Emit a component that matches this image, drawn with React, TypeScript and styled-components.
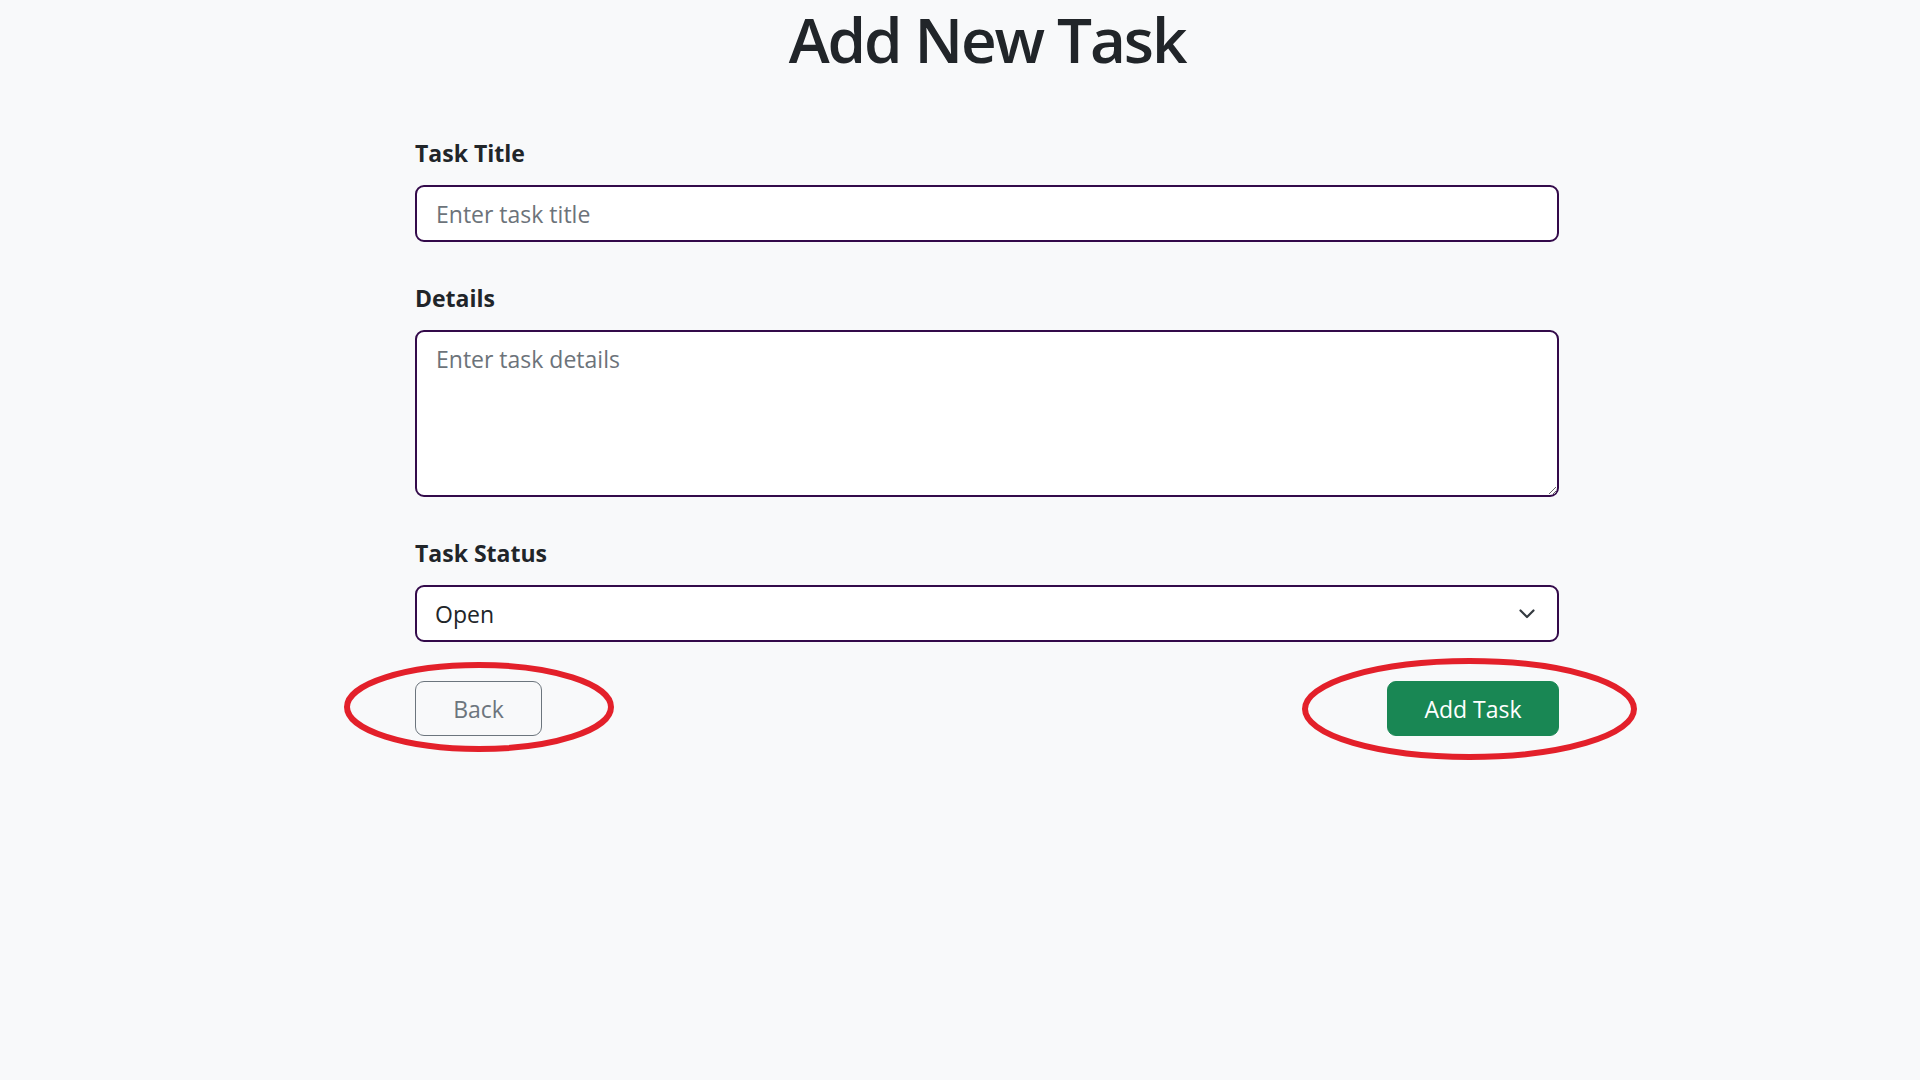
import React from "react";
import styled, { createGlobalStyle } from "styled-components";

const GlobalStyle = createGlobalStyle`
  html, body {
    margin: 0;
    padding: 0;
    background: #f8f9fa;
  }
  body {
    font-family: "Open Sans", "Noto Sans", "Liberation Sans", sans-serif;
    color: #212529;
  }
  * { box-sizing: border-box; }
`;

const Page = styled.div`
  min-height: 1080px;
  padding-left: 54px;
  padding-top: 4px;
  display: flex;
  flex-direction: column;
  align-items: center;
`;

const Title = styled.h1`
  margin: 0;
  font-size: 62px;
  font-weight: 600;
  line-height: 70px;
  color: #212529;
  letter-spacing: -2.1px;
`;

const Form = styled.form`
  width: 1144px;
  margin-top: 61px;
  display: flex;
  flex-direction: column;
`;

const Field = styled.div<{ $last?: boolean }>`
  display: flex;
  flex-direction: column;
  margin-bottom: ${(p) => (p.$last ? "39px" : "38px")};
`;

const Label = styled.label`
  font-size: 23px;
  font-weight: 700;
  line-height: 36px;
  margin-bottom: 14px;
  color: #212529;
`;

const controlStyles = `
  width: 100%;
  border: 2px solid #330a4a;
  border-radius: 9px;
  background: #ffffff;
  font-family: "Open Sans", "Noto Sans", "Liberation Sans", sans-serif;
  font-size: 23px;
  line-height: 36px;
  color: #212529;
  outline: none;
  &::placeholder {
    color: #6c737a;
  }
`;

const TextInput = styled.input`
  ${controlStyles}
  height: 57px;
  padding: 0 19px;
`;

const TextArea = styled.textarea`
  ${controlStyles}
  height: 167px;
  padding: 9px 19px;
  resize: vertical;
  display: block;
`;

const SelectWrap = styled.div`
  position: relative;
`;

const Select = styled.select`
  ${controlStyles}
  height: 57px;
  padding: 0 60px 0 18px;
  appearance: none;
  -webkit-appearance: none;
`;

const Chevron = styled.svg`
  position: absolute;
  right: 24px;
  top: 50%;
  transform: translateY(-50%);
  pointer-events: none;
`;

const Actions = styled.div`
  display: flex;
  justify-content: space-between;
  align-items: center;
`;

const ButtonWrap = styled.div`
  position: relative;
`;

const Button = styled.button<{ $variant: "back" | "primary" }>`
  height: 55px;
  width: ${(p) => (p.$variant === "back" ? "127px" : "172px")};
  border-radius: 9px;
  font-family: "Open Sans", "Noto Sans", "Liberation Sans", sans-serif;
  font-size: 23px;
  line-height: 36px;
  padding: 0;
  cursor: pointer;
  border: 1.5px solid ${(p) => (p.$variant === "back" ? "#6c757d" : "#198754")};
  background: ${(p) => (p.$variant === "back" ? "transparent" : "#198754")};
  color: ${(p) => (p.$variant === "back" ? "#6c757d" : "#ffffff")};
`;

const Annotation = styled.svg<{ $left: number; $top: number }>`
  position: absolute;
  left: ${(p) => p.$left}px;
  top: ${(p) => p.$top}px;
  pointer-events: none;
  overflow: visible;
`;

function RedEllipse({ left, top, w, h }: { left: number; top: number; w: number; h: number }) {
  return (
    <Annotation $left={left} $top={top} width={w} height={h} viewBox={`0 0 ${w} ${h}`}>
      <ellipse
        cx={w / 2}
        cy={h / 2}
        rx={w / 2 - 3}
        ry={h / 2 - 3}
        fill="none"
        stroke="#e3202a"
        strokeWidth={6}
      />
    </Annotation>
  );
}

export default function App() {
  return (
    <>
      <GlobalStyle />
      <Page>
        <Title>Add New Task</Title>
        <Form onSubmit={(e) => e.preventDefault()}>
          <Field>
            <Label htmlFor="title">Task Title</Label>
            <TextInput id="title" type="text" placeholder="Enter task title" />
          </Field>
          <Field>
            <Label htmlFor="details">Details</Label>
            <TextArea id="details" placeholder="Enter task details" />
          </Field>
          <Field $last>
            <Label htmlFor="status">Task Status</Label>
            <SelectWrap>
              <Select id="status" defaultValue="Open">
                <option>Open</option>
                <option>In Progress</option>
                <option>Done</option>
              </Select>
              <Chevron width="16" height="10" viewBox="0 0 16 10">
                <path d="M1.5 1.5 L8 8 L14.5 1.5" fill="none" stroke="#343a40" strokeWidth="2.2" strokeLinecap="round" strokeLinejoin="round" />
              </Chevron>
            </SelectWrap>
          </Field>
          <Actions>
            <ButtonWrap>
              <Button type="button" $variant="back">Back</Button>
              <RedEllipse left={-71} top={-19} w={270} h={90} />
            </ButtonWrap>
            <ButtonWrap>
              <Button type="submit" $variant="primary">Add Task</Button>
              <RedEllipse left={-85} top={-23} w={335} h={102} />
            </ButtonWrap>
          </Actions>
        </Form>
      </Page>
    </>
  );
}
